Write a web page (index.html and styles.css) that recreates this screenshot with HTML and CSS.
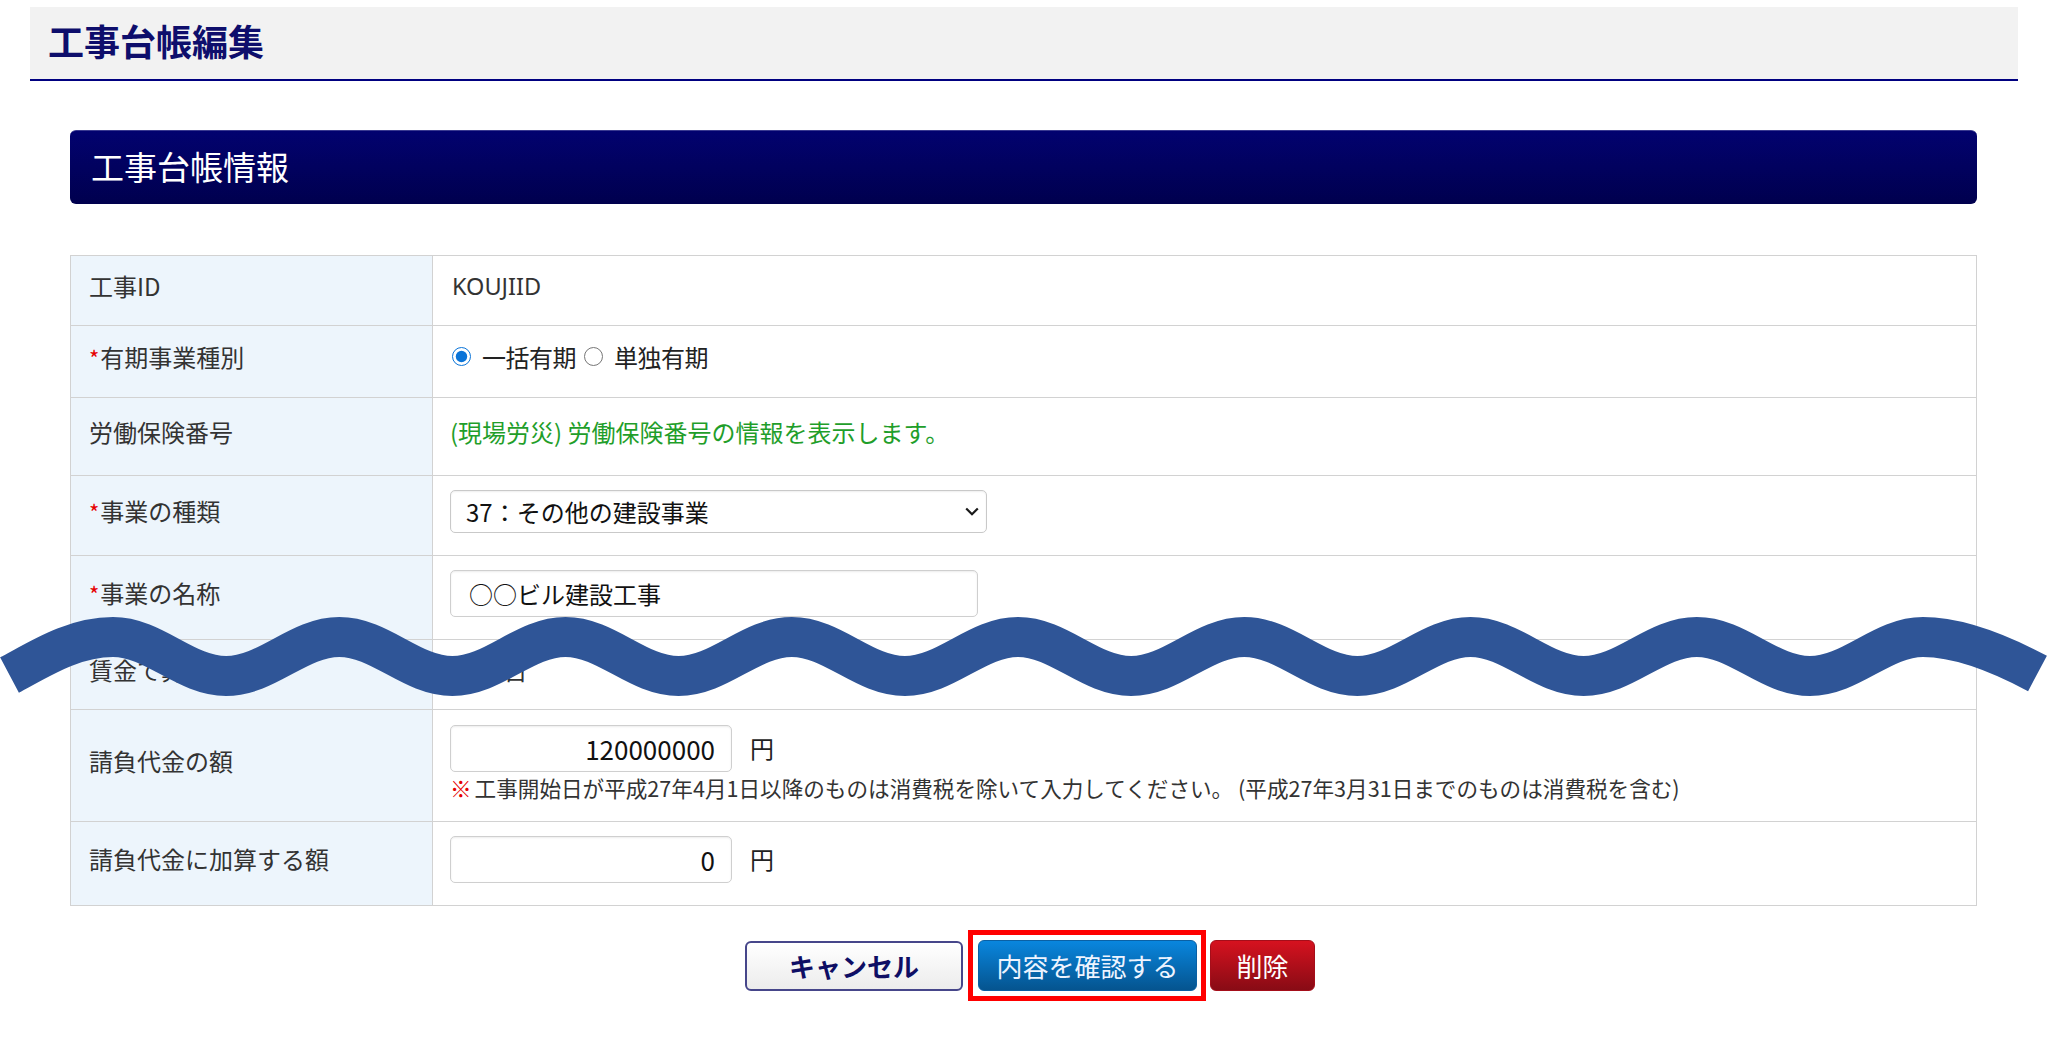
FILE: index.html
```html
<!DOCTYPE html>
<html lang="ja">
<head>
<meta charset="utf-8">
<title>工事台帳編集</title>
<link rel="stylesheet" href="styles.css">
</head>
<body>
<div class="page">
  <header class="page-header">
    <h1 class="page-title">工事台帳編集</h1>
  </header>
  <main class="content">
    <h2 class="section-title">工事台帳情報</h2>
    <table class="form-table">
      <tr class="row-70">
        <th>工事ID</th>
        <td><span class="plain">KOUJIID</span></td>
      </tr>
      <tr class="row-72">
        <th><span class="req">*</span>有期事業種別</th>
        <td>
          <div class="radio-group">
            <label class="radio"><input type="radio" name="kind" checked>一括有期</label>
            <label class="radio"><input type="radio" name="kind">単独有期</label>
          </div>
        </td>
      </tr>
      <tr class="row-78">
        <th>労働保険番号</th>
        <td><span class="info">(現場労災) 労働保険番号の情報を表示します。</span></td>
      </tr>
      <tr class="row-80">
        <th><span class="req">*</span>事業の種類</th>
        <td>
          <div class="select-wrap">
            <select class="select">
              <option>37：その他の建設事業</option>
            </select>
            <svg class="chevron" viewBox="0 0 14 9" width="14" height="9"><path d="M1.2 1.5 L7 7.2 L12.8 1.5" fill="none" stroke="#1a1a1a" stroke-width="2.2"/></svg>
          </div>
        </td>
      </tr>
      <tr class="row-84">
        <th><span class="req">*</span>事業の名称</th>
        <td><input class="text-input" type="text" value="○○ビル建設工事"></td>
      </tr>
      <tr class="row-70">
        <th>賃金で算定</th>
        <td><span class="plain-jp">〇〇 日</span></td>
      </tr>
      <tr class="row-112">
        <th>請負代金の額</th>
        <td class="stack">
          <div class="amount-line"><input class="amount-input" type="text" value="120000000"><span class="unit">円</span></div>
          <p class="note"><span class="mark">※</span>工事開始日が平成27年4月1日以降のものは消費税を除いて入力してください。 (平成27年3月31日までのものは消費税を含む)</p>
        </td>
      </tr>
      <tr class="row-84">
        <th>請負代金に加算する額</th>
        <td>
          <div class="amount-line"><input class="amount-input" type="text" value="0"><span class="unit">円</span></div>
        </td>
      </tr>
    </table>
    <div class="actions">
      <button class="btn btn-cancel" type="button">キャンセル</button>
      <span class="highlight"><button class="btn btn-confirm" type="button">内容を確認する</button></span>
      <button class="btn btn-delete" type="button">削除</button>
    </div>
  </main>
  <svg class="wave" viewBox="0 590 2048 130" width="2048" height="130" aria-hidden="true">
    <path d="M9.5,675 C39.5,659 73,637 113,637
      C154.2,637 185,676 226.1,676
      C267.3,676 298.1,637 339.3,637
      C380.5,637 411.2,676 452.4,676
      C493.6,676 524.3,637 565.5,637
      C606.7,637 637.4,676 678.6,676
      C719.8,676 750.5,637 791.8,637
      C833,637 863.7,676 904.9,676
      C946.1,676 976.8,637 1018,637
      C1059.2,637 1089.9,676 1131.1,676
      C1172.3,676 1203,637 1244.3,637
      C1285.5,637 1316.2,676 1357.4,676
      C1398.6,676 1429.3,637 1470.5,637
      C1511.7,637 1542.4,676 1583.6,676
      C1624.8,676 1655.5,637 1696.8,637
      C1738,637 1768.7,676 1809.9,676
      C1851.1,676 1881.8,637 1923,637
      C1963,637 2007.5,657.5 2037.5,673.5" fill="none" stroke="#2f5597" stroke-width="40" stroke-linecap="butt"/>
  </svg>
</div>
</body>
</html>
```
FILE: styles.css
```css
* {
  box-sizing: border-box;
}

html, body {
  margin: 0;
  padding: 0;
  background: #fff;
}

body {
  font-family: "Noto Sans CJK JP", "Noto Sans", sans-serif;
  color: #333;
}

.page {
  position: relative;
  width: 2048px;
  height: 1038px;
  overflow: hidden;
  padding-top: 7px;
}

.page-header {
  margin: 0 30px;
  height: 74px;
  background: #f2f2f2;
  border-bottom: 2px solid #000080;
  display: flex;
  align-items: center;
  padding: 0 0 6px 18px;
}

.page-title {
  margin: 0;
  font-size: 36px;
  font-weight: bold;
  line-height: 1;
  color: #0e0e6c;
}

.content {
  margin: 0 71px 0 70px;
}

.section-title {
  margin: 49px 0 0;
  height: 74px;
  border-radius: 6px;
  background: linear-gradient(#02026f, #00004e);
  border-top: 1px solid #3a3a90;
  color: #fff;
  font-size: 33px;
  font-weight: normal;
  line-height: 1;
  display: flex;
  align-items: center;
  padding: 0 0 2px 21px;
}

.form-table {
  margin-top: 51px;
  width: 100%;
  border-collapse: collapse;
  border: 1px solid #d2d2d2;
}

.form-table th,
.form-table td {
  border: 1px solid #d2d2d2;
  vertical-align: middle;
  font-size: 24px;
  line-height: 1.2;
  padding-bottom: 9px;
}

.form-table th {
  width: 362px;
  background: #edf5fc;
  font-weight: normal;
  text-align: left;
  padding-left: 18px;
  padding-right: 18px;
  padding-top: 0;
  color: #333;
}

.form-table td {
  padding-left: 17px;
  padding-right: 17px;
  padding-top: 0;
  background: #fff;
}

.row-70 { height: 70px; }
.row-72 { height: 72px; }
.row-78 { height: 78px; }
.row-80 { height: 80px; }
.row-84 { height: 84px; }
.row-112 { height: 112px; }

.req {
  color: #e60000;
  font-size: 22px;
  margin-right: 1px;
}

.plain {
  font-family: "Noto Sans", "Open Sans", sans-serif;
  font-size: 23.5px;
  color: #333;
  padding-left: 2px;
}

.plain-jp {
  color: #333;
}

.radio-group {
  display: flex;
  align-items: center;
  gap: 6px;
}

.radio {
  display: inline-flex;
  align-items: center;
  color: #222;
  letter-spacing: -0.5px;
}

.radio input {
  width: 19px;
  height: 19px;
  margin: 0 11px 0 2px;
  accent-color: #0a74d8;
}

.info {
  color: #1f9e2a;
}

.select-wrap {
  position: relative;
  width: 537px;
  height: 43px;
}

.select {
  appearance: none;
  -webkit-appearance: none;
  width: 100%;
  height: 100%;
  border: 1px solid #c9c9c9;
  border-radius: 5px;
  background: #fff;
  box-shadow: inset 0 1px 2px rgba(0, 0, 0, 0.07);
  font-family: "Noto Sans CJK JP", "Noto Sans", sans-serif;
  font-size: 24px;
  color: #111;
  padding: 0 40px 0 15px;
}

.chevron {
  position: absolute;
  right: 8px;
  top: 17px;
}

.text-input,
.amount-input {
  height: 47px;
  border: 1px solid #cfcfcf;
  border-radius: 5px;
  background: #fff;
  box-shadow: inset 0 1px 2px rgba(0, 0, 0, 0.08);
  font-family: "Noto Sans CJK JP", "Noto Sans", sans-serif;
  font-size: 24px;
  color: #111;
}

.text-input {
  width: 528px;
  padding: 0 18px;
}

.amount-line {
  display: flex;
  align-items: center;
}

.amount-input {
  width: 282px;
  text-align: right;
  padding: 0 16px;
  font-size: 26px;
}

.unit {
  margin-left: 18px;
  color: #222;
}

.stack {
  padding-top: 2px;
}

.form-table td.stack {
  padding-bottom: 6px;
}

.note {
  margin: 4px 0 0;
  font-size: 21.6px;
  line-height: 24px;
  color: #333;
  white-space: nowrap;
}

.mark {
  color: #e60000;
  margin-right: 3px;
}

.actions {
  margin-top: 24px;
  padding-left: 13px;
  display: flex;
  justify-content: center;
  align-items: center;
}

.btn {
  height: 51px;
  font-family: "Noto Sans CJK JP", "Noto Sans", sans-serif;
  font-size: 26px;
  line-height: 1;
  border-radius: 6px;
  padding: 0;
  cursor: pointer;
}

.btn-cancel {
  width: 218px;
  height: 50px;
  background: linear-gradient(#ffffff, #ececec);
  border: 2px solid #46468a;
  color: #0e0e64;
  font-weight: bold;
}

.highlight {
  display: inline-flex;
  border: 5px solid #ff0000;
  padding: 5px 4px 5px 5px;
  margin-left: 5px;
  background: #fff;
}

.btn-confirm {
  width: 219px;
  background: linear-gradient(#0986de, #05548f);
  border: 1px solid #0a60a4;
  color: #eef4ff;
}

.btn-delete {
  width: 105px;
  margin-left: 4px;
  background: linear-gradient(#d6121f, #880b15);
  border: 1px solid #a50e1a;
  color: #fff;
}

.wave {
  position: absolute;
  left: 0;
  top: 590px;
  pointer-events: none;
}
```
